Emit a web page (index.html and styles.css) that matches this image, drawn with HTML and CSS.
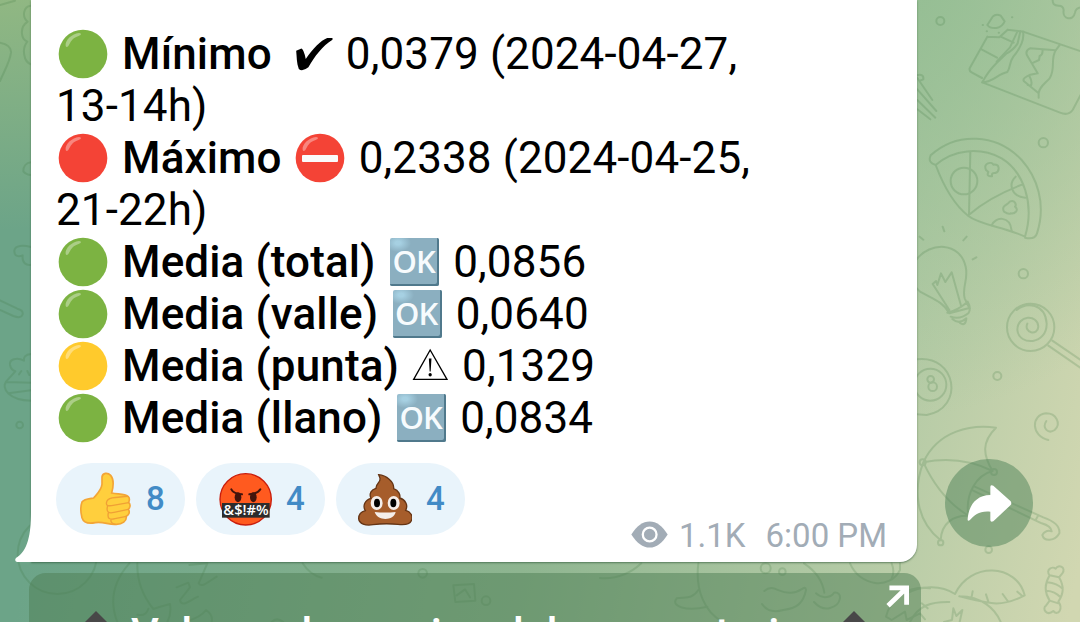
FILE: index.html
```
<!DOCTYPE html>
<html lang="es">

<head>
    <meta charset="UTF-8">
    <meta name="viewport" content="width=device-width, initial-scale=1.0">
    <title>Precios de la luz</title>
    <link rel="stylesheet" href="styles.css">
</head>

<body>
    <!-- shared emoji -->
    <svg class="defs" width="0" height="0">
        <symbol id="ball" viewBox="0 0 150 150">
            <circle cx="75" cy="75" r="73" />
            <path d="M126 22A73 73 0 0 1 22 126A73 73 0 0 0 126 22Z" fill="#000" opacity=".16" />
            <path d="M23 51C20 34 42 14 63 12C72 13 70 18 62 21C46 26 40 34 34 46C31 54 25 56 23 51Z" fill="#fff" opacity=".36" />
        </symbol>
    </svg>

    <div class="chat">
        <svg class="wallpaper" viewBox="0 0 1080 622">
            <!-- right side -->
            <g transform="translate(900 0) scale(.33333)">
                <circle cx="121" cy="63" r="12" />
                <path d="M262 75L278 50Q288 40 302 47L314 64Q307 80 290 84Q270 86 262 75ZM248 75h1M260 94h1M296 98h1M336 52h1" />
                <path d="M262 110L209 205Q207 213 215 217L246 234M262 110L298 112L323 89L371 95M246 149L291 173M302 110L341 128M352 95L330 142L290 185M323 89L300 110" />
                <path d="M361 94L353 130Q340 150 320 160L289 190Q264 215 247 247C280 247 292 222 322 216C333 200 326 190 340 170C365 140 373 115 369 95" />
                <path d="M369 95L560 160M247 247L480 338Q505 348 518 330L560 250M480 134L467 151L390 145Q375 152 381 166L413 220L391 224Q365 235 372 244L416 280V293M467 151C450 180 468 205 449 235C430 255 418 262 416 280M427 149Q430 163 419 168L417 180L400 188M388 228Q398 245 393 257L383 255" />
                <path d="M458 0Q457 17 475 17Q490 16 491 31C486 58 520 65 525 38Q528 18 560 22" />
                <path d="M50 226Q72 220 70 238L60 242M52 234L97 300M52 268L109 333M52 300L106 353M52 328L91 358" />
                <path d="M92 466C170 395 290 400 365 480C410 530 440 610 411 700Q405 720 375 713M92 466Q82 488 107 495C160 448 240 440 305 475C370 515 405 610 375 710M107 495C135 570 170 620 205 648C240 675 310 680 375 710M211 455L207 644M207 644Q270 590 366 554" />
                <circle cx="192" cy="543" r="40" />
                <path d="M347 530C325 550 332 590 376 593M275 676C285 650 330 645 335 692M258 510C248 488 275 484 280 494C300 490 300 514 286 519Q274 517 276 529Q258 530 265 516ZM312 635C302 615 325 615 329 605C345 598 350 615 345 620C358 630 345 642 332 640Q326 644 312 635Z" />
                <circle cx="430" cy="428" r="14" />
                <path d="M59 710L70 719M128 680L133 694M200 710L190 721M218 778L229 772" />
                <path d="M50 778C90 725 180 725 197 800C206 840 185 860 194 895L208 924L148 940C130 905 95 895 60 875L50 865M148 930L98 852L108 843L112 855L123 820L136 846L155 817L184 920M142 938Q175 930 203 905Q215 925 205 940Q180 960 152 950M157 957Q178 975 199 955Q197 980 180 969" />
                <circle cx="370" cy="821" r="14" />
                <circle cx="392" cy="982" r="71" />
                <path d="M382 971C370 998 413 1010 415 980C414 942 352 944 352 990C358 1040 442 1034 440 970C435 910 380 905 350 930M457 1022L560 1092M445 1037L560 1116" />
                <circle cx="292" cy="1128" r="12" />
                <path d="M50 1078C170 1063 195 1225 80 1245L50 1243" />
                <circle cx="91" cy="1154" r="48" />
                <circle cx="92" cy="1138" r="10" />
                <circle cx="98" cy="1160" r="13" />
                <path d="M439 1263C425 1285 445 1303 464 1290C485 1270 468 1240 438 1240C392 1245 393 1308 445 1320" />
            </g>
            <g transform="translate(900 420) scale(.33333)">
                <path d="M70 127C115 30 215 13 288 23C245 65 248 105 278 153C230 165 195 220 205 287C160 285 124 310 122 361C45 300 40 205 70 127ZM70 127Q180 105 278 153M70 127Q120 235 205 287M224 200L430 292Q482 310 478 340C465 364 432 366 427 345Q438 328 455 334Q453 318 425 310L218 211M332 248L322 263M415 286L407 300" />
                <circle cx="68" cy="127" r="9" />
                <circle cx="282" cy="156" r="9" />
                <circle cx="122" cy="368" r="8" />
                <circle cx="266" cy="389" r="10" />
                <path d="M165 522C210 425 350 430 374 526C300 565 265 550 178 529M215 530L218 514M265 545L258 523M323 543L308 522M367 528L352 515M165 522C125 495 65 495 20 520M30 606C55 555 95 545 148 546M65 550L83 565M178 529C245 530 285 565 302 606M132 606L156 600L160 565L169 588L187 570L179 606" />
                <path d="M449 466C435 450 457 437 467 446C475 431 500 442 487 460L477 472Q500 510 475 545C490 565 475 590 460 573C440 590 425 565 438 557L449 542Q425 505 449 466ZM449 466L477 472M442 487Q472 490 487 506M440 512Q465 514 481 531M449 542L475 550" />
            </g>
            <!-- left side -->
            <g transform="scale(.33333)">
                <path d="M0 15L45 2M0 128Q35 135 33 158C30 185 12 215 0 243M92 17C70 20 65 50 83 65C60 80 60 115 82 125C65 145 70 185 93 193M93 487C78 488 70 500 70 514Q78 524 93 525M93 741C70 735 45 735 43 752C42 770 57 771 68 766C65 790 80 797 94 794M0 901L52 926Q70 930 68 943Q64 957 40 948L0 930" />
                <path d="M93 1062C75 1063 70 1074 72 1082C50 1070 27 1078 30 1095Q33 1110 46 1114L18 1145C5 1165 25 1200 93 1202M18 1146L93 1148M25 1180L93 1171M64 1113L57 1123M82 1113L88 1125" />
                <circle cx="59" cy="1275" r="10" />
            </g>
            <!-- bottom strip -->
            <g transform="translate(0 500) scale(.33333)">
                <circle cx="172" cy="163" r="119" />
                <path d="M388 190C335 250 330 310 352 366M412 190Q410 265 460 327Q480 320 510 312Q515 340 502 366M412 344Q438 350 445 326M530 262L565 248L570 262L540 300C545 325 570 300 594 290M568 195L622 190L596 250C605 265 625 245 650 230M550 366Q600 355 618 330Q640 345 635 366M815 366Q830 350 850 366M908 190Q930 225 965 233" />
            </g>
            <g transform="translate(600 500) scale(.33333)">
                <path d="M-440 256L-378 252L-374 302L-434 306ZM-430 286L-405 268L-390 292" />
                <path d="M0 234Q70 240 124 190M295 190C285 270 315 340 370 366M612 190Q665 225 673 278M493 273C520 250 535 280 570 278C605 280 615 250 618 270C610 310 590 325 550 330C515 340 495 325 486 312M295 270C275 300 255 290 230 295C210 320 260 335 322 320M648 280C670 300 695 290 702 278C730 275 725 315 690 324C670 330 655 320 642 306M750 190C780 260 870 270 900 210V190M875 190Q885 215 875 235M990 265C920 255 870 300 858 350L875 360L915 335L920 360L960 340L975 358" />
                <circle cx="497" cy="205" r="15" />
                <circle cx="547" cy="215" r="10" />
                <circle cx="-532" cy="220" r="13" />
                <circle cx="-342" cy="302" r="13" />
            </g>
        </svg>

        <div class="row">
            <div class="bubble">
                <svg class="tail" viewBox="0 0 17 50">
                    <path d="M17 0H16C16 22 13 39 1 46Q-1 49 2 50H17Z" />
                </svg>
                <div class="text">
                    <svg class="emoji green"><use href="#ball" /></svg> <b>Mínimo</b>
                    <svg class="check" viewBox="762 55 114 103"><path d="M765 97L781 90Q788 92 794 122C815 90 840 65 859 58H875V63C845 82 821 112 802 147Q783 162 773 152C766 135 767 115 765 97Z" /></svg>
                    0,0379 (2024-04-27,<br>
                    13-14h)<br>
                    <svg class="emoji red"><use href="#ball" /></svg> <b>Máximo</b>
                    <span class="no-entry"><svg class="emoji red"><use href="#ball" /></svg></span>
                    0,2338 (2024-04-25,<br>
                    21-22h)<br>
                    <svg class="emoji green"><use href="#ball" /></svg> <b>Media (total)</b>
                    <span class="ok">OK</span> 0,0856<br>
                    <svg class="emoji green"><use href="#ball" /></svg> <b>Media (valle)</b>
                    <span class="ok">OK</span> 0,0640<br>
                    <svg class="emoji yellow"><use href="#ball" /></svg> <b>Media (punta)</b>
                    <svg class="warning" viewBox="127 356 110 100"><path d="M181 362L131 451H232Z" /><path d="M177 388H185L182.500 427H179.500Z" class="mark" /><circle cx="181" cy="437" r="5" class="mark" /></svg>
                    0,1329<br>
                    <svg class="emoji green"><use href="#ball" /></svg> <b>Media (llano)</b>
                    <span class="ok">OK</span> 0,0834
                </div>

                <div class="reactions">
                    <div class="reaction">
                        <svg viewBox="108 60 168 168">
                            <path d="M186 78C188 65 203 64 212 73C220 82 222 100 215 126C235 130 254 128 264 136C272 142 267 150 266 155C273 161 270 170 265 175C271 184 266 192 259 196C260 211 247 220 229 220C206 222 190 211 166 215C145 219 130 213 126 200C122 185 121 166 126 153C133 143 151 143 161 141C174 126 184 117 186 100Z" fill="#ffcf3d" stroke="#f3a536" stroke-width="5" />
                            <path d="M201 150C206 137 225 141 240 138Q255 137 264 136M201 150C195 165 205 165 215 164L266 155M203 164C197 184 207 188 222 184L265 175M205 186C201 203 210 207 225 203L259 196M213 206Q211 217 226 220" fill="none" stroke="#f0a035" stroke-width="4" stroke-linecap="round" />
                        </svg>
                        <span>8</span>
                    </div>
                    <div class="reaction">
                        <svg viewBox="528 60 168 168">
                            <circle cx="617" cy="145" r="77" fill="#ff5a1f" stroke="#c91d0c" stroke-width="4" />
                            <path d="M574 115Q580 128 606 130M661 115Q654 128 628 130" fill="none" stroke="#43140c" stroke-width="6" stroke-linecap="round" />
                            <ellipse cx="594" cy="139" rx="10" ry="15" fill="#43140c" />
                            <ellipse cx="640" cy="139" rx="10" ry="15" fill="#43140c" />
                            <rect x="546" y="156" width="143" height="44" fill="#2d2c2c" />
                            <text x="618" y="193" text-anchor="middle" textLength="136" lengthAdjust="spacingAndGlyphs" class="swear">&amp;$!#%</text>
                        </svg>
                        <span>4</span>
                    </div>
                    <div class="reaction">
                        <svg viewBox="228 60 168 168">
                            <path d="M296 71C318 73 343 91 341 113C356 118 362 132 359 141C377 146 385 163 377 178C392 181 400 196 394 209C388 222 372 222 354 220Q315 216 279 221C257 225 237 218 236 203C236 190 244 182 256 179C247 164 255 147 273 142C266 127 275 115 288 112C287 96 306 94 299 79Z" fill="#a65d2b" stroke="#653414" stroke-width="4" />
                            <ellipse cx="290" cy="156" rx="18" ry="21" fill="#f5eeea" />
                            <ellipse cx="341" cy="156" rx="18" ry="21" fill="#f5eeea" />
                            <ellipse cx="291" cy="156" rx="9" ry="13" />
                            <ellipse cx="340" cy="156" rx="9" ry="13" />
                            <path d="M284 183Q315 186 347 183C342 210 292 211 284 183Z" fill="#f5eeea" />
                        </svg>
                        <span>4</span>
                    </div>
                </div>

                <div class="meta">
                    <svg class="eye" viewBox="92 59 113 82">
                        <path d="M93 100C110 73 128 60 149 60C170 60 187 73 204 100C187 127 170 140 149 140C128 140 110 127 93 100Z" fill="#a2acb6" />
                        <circle cx="149" cy="100" r="21" fill="#a2acb6" stroke="#fff" stroke-width="7" />
                    </svg>
                    <span class="views">1.1K</span>
                    <span>6:00 PM</span>
                </div>
            </div>

            <div class="share">
                <svg viewBox="200 188 135 117"><path d="M270 196Q271 189 279 193L331 240Q335 246 331 251L279 300Q271 304 270 297V271C237 268 224 280 208 297Q201 301 202 293C205 255 225 222 270 221Z" /></svg>
            </div>
        </div>

        <div class="button">
            <svg class="diamond" viewBox="0 0 40 40"><path d="M20 0L40 20L20 40L0 20Z" /></svg>
            <span class="label">Valores de precios del momentario</span>
            <svg class="diamond" viewBox="0 0 40 40"><path d="M20 0L40 20L20 40L0 20Z" /></svg>
            <svg class="link" viewBox="860 256 67 66"><path d="M870 264H920V313M918 266L866 316" /></svg>
        </div>
    </div>
</body>

</html>
```
FILE: styles.css
```
body {
    margin: 0;
    font-family: Roboto, "Liberation Sans", sans-serif;
    overflow: hidden;
}

svg {
    display: inline-block;
    flex: none;
}

.defs {
    position: absolute;
}

.chat {
    position: relative;
    width: 1080px;
    height: 622px;
    overflow: hidden;
    background:
        radial-gradient(ellipse 640px 260px at 0 -30px, #95ba82 0%, rgba(149, 186, 130, 0) 100%),
        radial-gradient(ellipse 420px 480px at 880px -60px, #92bd92 0%, rgba(146, 189, 146, 0) 100%),
        linear-gradient(102deg, #6ca488 12%, #8eb590 53%, #b3caa5 80%, #d1d7b1 99%);
}

.wallpaper {
    position: absolute;
    inset: 0;
    fill: none;
    stroke: #3e7740;
    stroke-width: 6px;
    stroke-linecap: round;
    stroke-linejoin: round;
    opacity: 0.2;
}

.row {
    position: relative;
    display: flex;
    align-items: flex-end;
    gap: 28px;
    padding-left: 31px;
}

/* message */
.bubble {
    position: relative;
    box-sizing: border-box;
    width: 886px;
    height: 562px;
    padding: 28px 30px 0 25px;
    background: #fff;
    border-radius: 0 0 17px 0;
    box-shadow: 0 1px 2px rgba(40, 80, 50, 0.6);
}

.tail {
    position: absolute;
    left: -16px;
    bottom: 0;
    width: 17px;
    height: 50px;
    fill: #fff;
}

.text {
    font-size: 44px;
    line-height: 52px;
    letter-spacing: 0.12px;
    color: #000;
    white-space: nowrap;
}

.text b {
    font-weight: 500;
}

.emoji {
    width: 50px;
    height: 50px;
    margin: 0 3px 0 2px;
    vertical-align: -10px;
}

.green {
    fill: #7cb342;
}

.red {
    fill: #f44336;
}

.yellow {
    fill: #ffca2c;
}

.ok {
    display: inline-block;
    box-sizing: border-box;
    width: 49px;
    height: 48px;
    margin: 0 3px 0 3.5px;
    padding-right: 2px;
    border-radius: 2px;
    background: radial-gradient(ellipse 13px 9px at 8px 5px, #a6d0e2 20%, #8bafc0 100%);
    box-shadow: inset -2px -2px 0 #50798c;
    color: #f7fbfd;
    font: 600 31px/46px "Open Sans", sans-serif;
    letter-spacing: -1px;
    text-align: center;
    vertical-align: -9px;
    overflow: hidden;
}

.no-entry {
    position: relative;
}

.no-entry::after {
    content: "";
    position: absolute;
    left: 9px;
    top: 23px;
    width: 36px;
    height: 7px;
    border-radius: 1px;
    background: #fafafa;
}

.check {
    width: 38px;
    height: 34px;
    margin: 0 2px 0 12px;
    vertical-align: -2px;
}

.warning {
    width: 37px;
    height: 33px;
    margin: 0 2px;
    vertical-align: 0;
    fill: none;
    stroke: #000;
    stroke-width: 4px;
}

.warning .mark {
    fill: #000;
    stroke: none;
}

.reactions {
    display: flex;
    gap: 11px;
    margin-top: 19px;
}

.reaction {
    display: flex;
    align-items: center;
    gap: 14px;
    box-sizing: border-box;
    width: 129px;
    height: 72px;
    padding-left: 20px;
    border-radius: 36px;
    background: #e9f4fb;
    color: #428bc6;
    font-size: 33px;
    font-weight: 500;
}

.reaction svg {
    width: 56px;
    height: 56px;
}

.reaction span {
    margin-top: -2px;
}

.swear {
    font: 600 42px "Open Sans", sans-serif;
    fill: #fff;
}

.meta {
    display: flex;
    align-items: center;
    justify-content: flex-end;
    height: 38px;
    margin-top: -19px;
    color: #a2acb6;
    font-size: 33px;
}

.eye {
    width: 37px;
    height: 27px;
    margin: -2px 11px 0 0;
}

.views {
    margin-right: 20px;
}

.share {
    display: flex;
    align-items: center;
    justify-content: center;
    width: 88px;
    height: 88px;
    margin-bottom: 15px;
    border-radius: 50%;
    background: rgba(78, 130, 87, 0.5);
}

.share svg {
    width: 45px;
    height: 39px;
    fill: #fff;
}

/* inline keyboard button */
.button {
    position: relative;
    display: flex;
    align-items: center;
    box-sizing: border-box;
    width: 892px;
    height: 116px;
    margin: 11px 0 0 29px;
    padding: 0 47px;
    border-radius: 17px;
    background: rgba(78, 126, 83, 0.5);
    color: #fff;
    font-size: 43.2px;
    font-weight: 500;
}

.label {
    flex: 1;
    margin: 4px 0 0 15px;
    white-space: nowrap;
}

.diamond {
    width: 40px;
    height: 40px;
    fill: #484848;
}

.link {
    position: absolute;
    top: 12px;
    right: 12px;
    width: 23px;
    height: 23px;
    fill: none;
    stroke: #fff;
    stroke-width: 14px;
}
```
